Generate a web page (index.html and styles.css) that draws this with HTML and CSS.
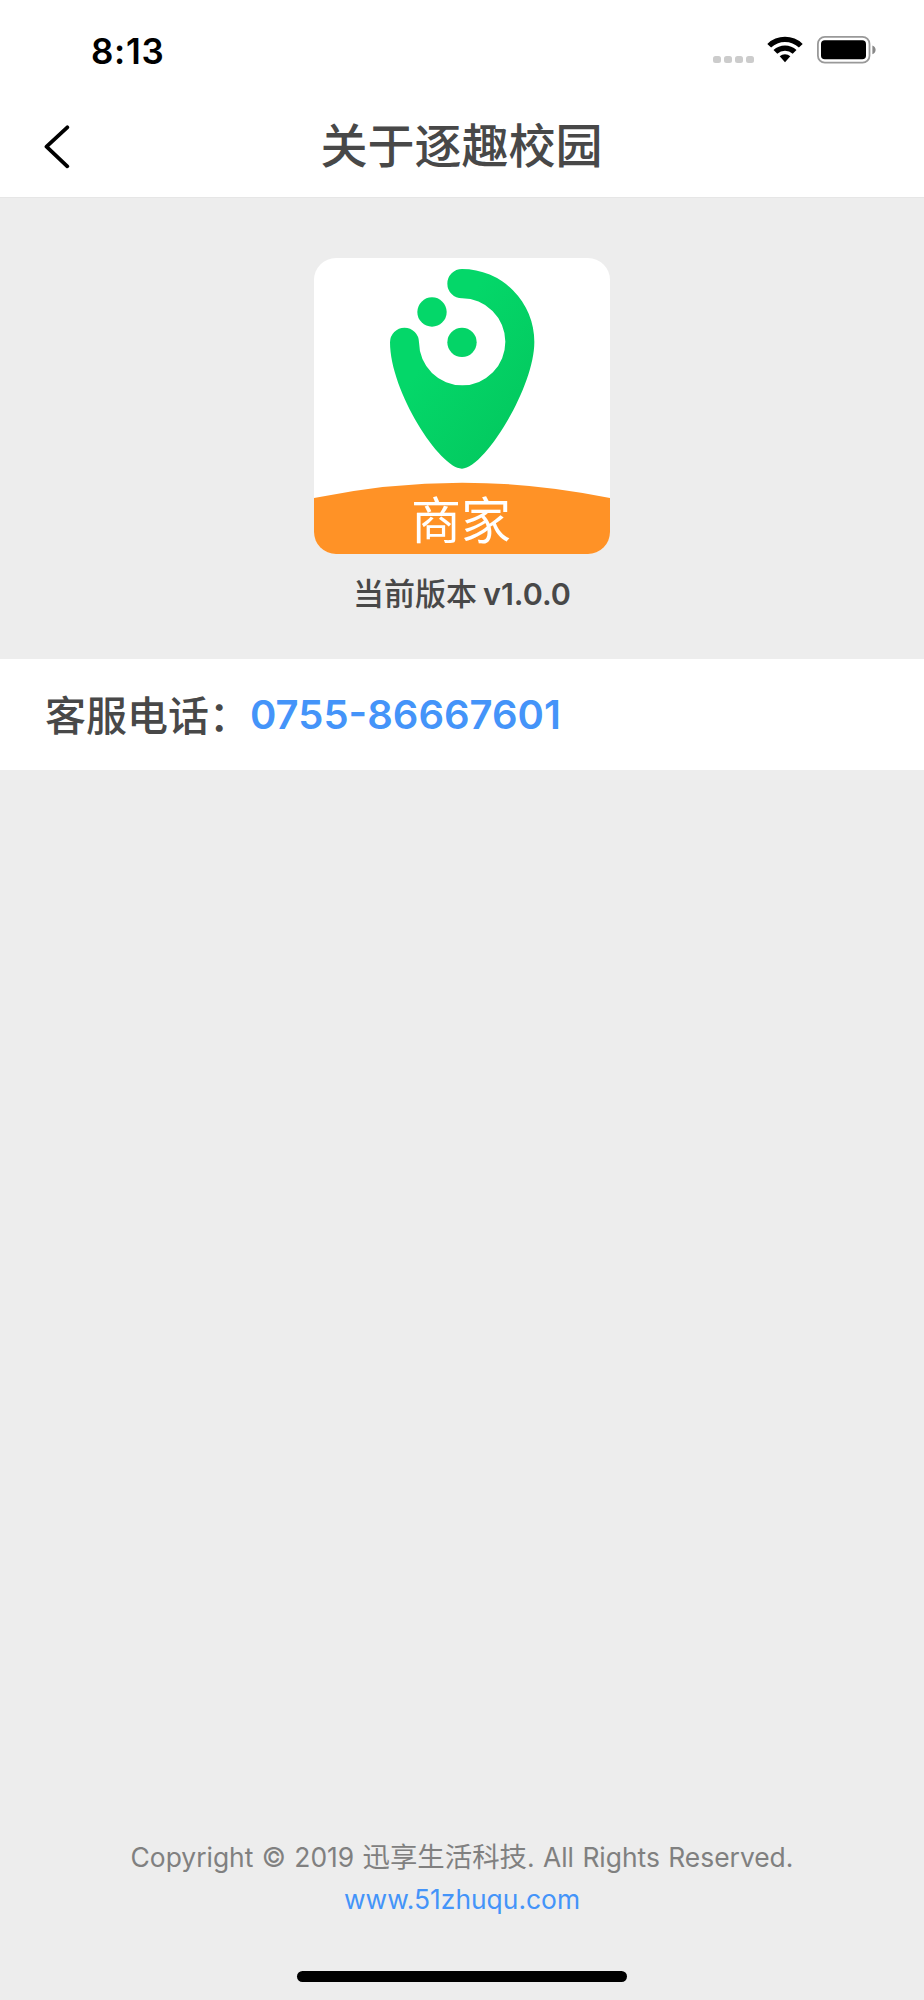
FILE: index.html
```
<!DOCTYPE html>
<html lang="zh-CN">
<head>
    <meta charset="UTF-8">
    <meta name="viewport" content="width=device-width, initial-scale=1.0">
    <title>关于逐趣校园</title>
    <link rel="stylesheet" href="styles.css">
</head>
<body>
    <header class="header">
        <div class="status-bar">
            <span class="time">8:13</span>
            <div class="status-icons">
                <div class="signal"><i></i><i></i><i></i><i></i></div>
                <svg class="wifi" width="36" height="27" viewBox="0 0 36 27">
                    <path d="M0.3 7.9A25.5 25.5 0 0 1 35.7 7.9L31.9 11.6A20.2 20.2 0 0 0 4.1 11.6Z"/>
                    <path d="M6.5 14A16.8 16.8 0 0 1 29.5 14L25.7 17.7A11.4 11.4 0 0 0 10.3 17.7Z"/>
                    <path d="M12.7 20.3A8.2 8.2 0 0 1 23.3 20.3L18 26.2Z"/>
                </svg>
                <svg class="battery" width="60" height="28" viewBox="0 0 60 28">
                    <rect x="0.9" y="0.9" width="51.6" height="25.8" rx="7" fill="none" stroke="#999" stroke-width="1.8"/>
                    <rect x="4" y="4.2" width="45" height="19" rx="3.8"/>
                    <path d="M55.4 9.4Q58.6 10.5 58.6 13.8T55.4 18.3Z" fill="#888"/>
                </svg>
            </div>
        </div>
        <nav class="nav-bar">
            <a class="back" href="#" aria-label="返回">
                <svg width="26" height="44" viewBox="0 0 26 44">
                    <path d="M23.3 2.3L2.5 21.6L23.3 41.3" fill="none" stroke="#000" stroke-width="3.8" stroke-linecap="round" stroke-linejoin="round"/>
                </svg>
            </a>
            <h1 class="title">关于逐趣校园</h1>
        </nav>
    </header>

    <section class="about">
        <svg class="logo" viewBox="0 0 888 888">
            <defs>
                <linearGradient id="pin" x1="0" y1="0" x2="1" y2="1">
                    <stop offset="0.35" stop-color="#04d769"/>
                    <stop offset="1" stop-color="#03c55c"/>
                </linearGradient>
            </defs>
            <rect width="888" height="888" fill="#fff"/>
            <path d="M444 33A217 219 0 0 1 661 252C661 390 510 632 444 632C378 632 228 400 228 253A43.5 44 0 0 1 315 253A129.5 130.5 0 1 0 444 121A44 44 0 0 1 444 33Z" fill="url(#pin)"/>
            <circle cx="354" cy="162" r="44" fill="#04d769"/>
            <circle cx="444" cy="253" r="44" fill="#04d467"/>
            <path d="M0 720Q444 628 888 720V888H0Z" fill="#ff9226"/>
            <text class="logo-text" x="441" y="842" text-anchor="middle">商家</text>
        </svg>
        <p class="version">当前版本<span>v1.0.0</span></p>
    </section>

    <section class="contact">
        <span class="label">客服电话：</span>
        <a class="phone" href="tel:0755-86667601">0755-86667601</a>
    </section>

    <footer class="footer">
        <p class="copyright">Copyright © 2019 <span>迅享生活科技</span>. All Rights Reserved.</p>
        <a class="site" href="#">www.51zhuqu.com</a>
        <div class="home-bar"></div>
    </footer>
</body>
</html>
```

FILE: styles.css
```
* {
    box-sizing: border-box;
    margin: 0;
    padding: 0;
}
body {
    display: flex;
    flex-direction: column;
    height: 2000px;
    background-color: #ededed;
    color: #484848;
    font-family: Inter, "Noto Sans CJK SC", sans-serif;
}
a {
    color: #4494f9;
    text-decoration: none;
}
.header {
    height: 198px;
    background-color: #fff;
    border-bottom: 1px solid #e6e6e6;
}
.status-bar {
    display: flex;
    justify-content: space-between;
    height: 100px;
    padding: 30px 47px 0 91px;
}
.time {
    height: 42px;
    line-height: 42px;
    font-size: 35px;
    font-weight: 600;
    letter-spacing: 0.7px;
    color: #000;
}
.status-icons {
    display: flex;
    align-items: flex-start;
    padding-top: 6px;
}
.signal {
    display: flex;
    gap: 3px;
    margin: 20px 13px 0 0;
}
.signal i {
    width: 8px;
    height: 7px;
    border-radius: 2.5px;
    background-color: #ccc;
}
.wifi {
    margin-right: 14px;
}
.nav-bar {
    display: grid;
    grid-template-columns: 120px 1fr 120px;
    align-items: center;
    height: 92px;
}
.back {
    height: 44px;
    padding: 1px 0 0 44px;
}
.title {
    padding: 0 1px 1px 0;
    font-size: 47px;
    font-weight: 500;
    line-height: 68px;
    text-align: center;
    white-space: nowrap;
}
.about {
    display: flex;
    flex-direction: column;
    align-items: center;
    height: 461px;
    padding-top: 60px;
}
.logo {
    width: 296px;
    height: 296px;
    border-radius: 22px;
}
.logo-text {
    font-size: 150px;
    font-weight: 400;
    fill: #fff;
}
.version {
    margin-top: 17px;
    font-size: 31px;
    font-weight: 500;
    line-height: 46px;
}
.version span {
    margin-left: 6px;
    font-size: 30.5px;
    font-weight: 600;
}
.contact {
    display: flex;
    align-items: center;
    height: 111px;
    padding-left: 45px;
    background-color: #fff;
    font-size: 41px;
    font-weight: 500;
}
.label {
    padding-bottom: 3px;
}
.phone {
    font-size: 40px;
    font-weight: 600;
}
.footer {
    display: flex;
    flex-direction: column;
    align-items: center;
    margin-top: auto;
    padding-bottom: 18px;
    font-size: 26.4px;
    line-height: 42px;
}
.copyright {
    color: #808080;
    word-spacing: 1px;
    white-space: nowrap;
}
.copyright span {
    font-size: 27.4px;
}
.home-bar {
    width: 330px;
    height: 11px;
    margin-top: 51px;
    border-radius: 6px;
    background-color: #000;
}
```
